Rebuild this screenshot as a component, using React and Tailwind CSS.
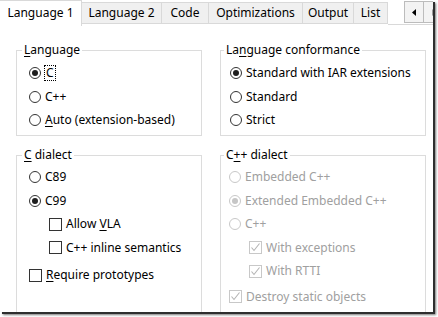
import React from "react";

// --- Data ---
const TABS = [
  { label: "Language 1", w: "w-[82px]", active: true },
  { label: "Language 2", w: "w-[80px]" },
  { label: "Code", w: "w-[47px]" },
  { label: "Optimizations", w: "w-[94px]" },
  { label: "Output", w: "w-[51px]" },
  { label: "List", w: "w-[34px]" },
];

// Label with an underlined access key, like a Win32 dialog
function Mn({ text, at }) {
  if (at == null) return <>{text}</>;
  return (
    <>
      {text.slice(0, at)}
      <span className="underline underline-offset-[2px] decoration-1">{text[at]}</span>
      {text.slice(at + 1)}
    </>
  );
}

function Radio({ label, at, checked, disabled, focus }) {
  return (
    <div className="flex items-center h-[23.5px]">
      <span
        className={`w-[12px] h-[12px] rounded-full border bg-white flex items-center justify-center ${
          disabled ? "border-[#c8c8c8]" : "border-[#333333]"
        }`}
      >
        {checked && (
          <span className={`w-[6px] h-[6px] rounded-full ${disabled ? "bg-[#c6c6c6]" : "bg-[#1e1e1e]"}`} />
        )}
      </span>
      <span
        className={`ml-[4px] leading-[14px] ${disabled ? "text-[#a0a0a0]" : "text-black"} ${
          focus ? "outline outline-1 outline-dotted outline-black px-[1px]" : ""
        }`}
      >
        <Mn text={label} at={at} />
      </span>
    </div>
  );
}

function Check({ label, at, checked, disabled }) {
  return (
    <div className="flex items-center h-[23.5px]">
      <span
        className={`w-[13px] h-[13px] border bg-white flex items-center justify-center ${
          disabled ? "border-[#c8c8c8]" : "border-[#333333]"
        }`}
      >
        {checked && (
          <svg width="11" height="11" viewBox="0 0 11 11">
            <polyline points="1.5,5.5 4,8.5 9.5,1.5" fill="none" stroke={disabled ? "#b4b4b4" : "#222"} strokeWidth="1.1" />
          </svg>
        )}
      </span>
      <span className={`ml-[4px] ${disabled ? "text-[#a0a0a0]" : "text-black"}`}>
        <Mn text={label} at={at} />
      </span>
    </div>
  );
}

// legend is placed after the fieldset padding, so it gets a negative margin
function GroupBox({ title, at, className = "", legendClass = "", children }) {
  return (
    <fieldset className={`border border-[#dcdcdc] ${className}`}>
      <legend className={`px-[2px] leading-[16px] text-black ${legendClass}`}>
        <Mn text={title} at={at} />
      </legend>
      {children}
    </fieldset>
  );
}

export default function App() {
  return (
    <div className="w-[438px] h-[317px] bg-white overflow-hidden font-['Noto_Sans','Open_Sans',sans-serif] text-[12px]">
      {/* dialog window, dark edge and shadow on right/bottom */}
      <div className="w-[433px] h-[312px] bg-white overflow-hidden shadow-[2px_2px_0_#2e2e2e,3px_3px_2px_#777]">
        {/* tab strip */}
        <div className="flex items-start h-[25px]">
          {TABS.map((t) =>
            t.active ? (
              <div
                key={t.label}
                className={`${t.w} h-[26px] shrink-0 bg-white border-t border-r border-[#d9d9d9] flex items-center justify-center pb-[2px] z-10 text-black`}
              >
                {t.label}
              </div>
            ) : (
              <div
                key={t.label}
                className={`${t.w} h-[22px] mt-[2px] shrink-0 bg-[#f0f0f0] border-t border-r border-b border-[#d9d9d9] flex items-center justify-center text-black`}
              >
                {t.label}
              </div>
            )
          )}
          <div className="flex-1 h-[25px] border-b border-[#d9d9d9] flex items-start pl-[16px] pt-[1px]">
            <div className="w-[20px] h-[22px] shrink-0 bg-[#f3f3f3] border border-[#bcbcbc] flex items-center justify-center">
              <svg width="4" height="7" viewBox="0 0 4 7">
                <polygon points="4,0 4,7 0,3.5" fill="#000" />
              </svg>
            </div>
            <div className="w-[20px] h-[22px] shrink-0 bg-[#f3f3f3] border border-l-0 border-[#bcbcbc] flex items-center justify-center">
              <svg width="4" height="7" viewBox="0 0 4 7">
                <polygon points="0,0 0,7 4,3.5" fill="#9a9a9a" />
              </svg>
            </div>
          </div>
        </div>

        {/* page content */}
        <div className="grid grid-cols-[186px_207px] gap-x-[17px] gap-y-[11px] pl-[16px] pt-[17px]">
          <GroupBox title="Language" at={0} legendClass="-ml-[7px]" className="pl-[12px] pt-[3.5px] pb-[3px]">
            <Radio label="C" checked focus />
            <Radio label="C++" />
            <Radio label="Auto (extension-based)" at={0} />
          </GroupBox>

          <GroupBox title="Language conformance" at={2} legendClass="-ml-[6px]" className="ml-[1px] pl-[9px] pt-[3.5px] pb-[3px]">
            <Radio label="Standard with IAR extensions" checked />
            <Radio label="Standard" />
            <Radio label="Strict" />
          </GroupBox>

          <GroupBox title="C dialect" at={0} legendClass="-ml-[7px]" className="pl-[12px] pt-[2.5px] pb-[3.5px]">
            <Radio label="C89" />
            <Radio label="C99" checked />
            <div className="pl-[20px]">
              <Check label="Allow VLA" at={6} />
              <Check label="C++ inline semantics" />
            </div>
            <div className="mt-[4px]">
              <Check label="Require prototypes" at={0} />
            </div>
          </GroupBox>

          <GroupBox title="C++ dialect" at={1} legendClass="-ml-[5px]" className="ml-[1px] pl-[8px] pt-[2.5px] h-[200px]">
            <Radio label="Embedded C++" disabled />
            <Radio label="Extended Embedded C++" checked disabled />
            <Radio label="C++" disabled />
            <div className="pl-[20px]">
              <Check label="With exceptions" checked disabled />
              <Check label="With RTTI" checked disabled />
            </div>
            <div className="mt-[2px]">
              <Check label="Destroy static objects" checked disabled />
            </div>
          </GroupBox>
        </div>
      </div>
    </div>
  );
}
